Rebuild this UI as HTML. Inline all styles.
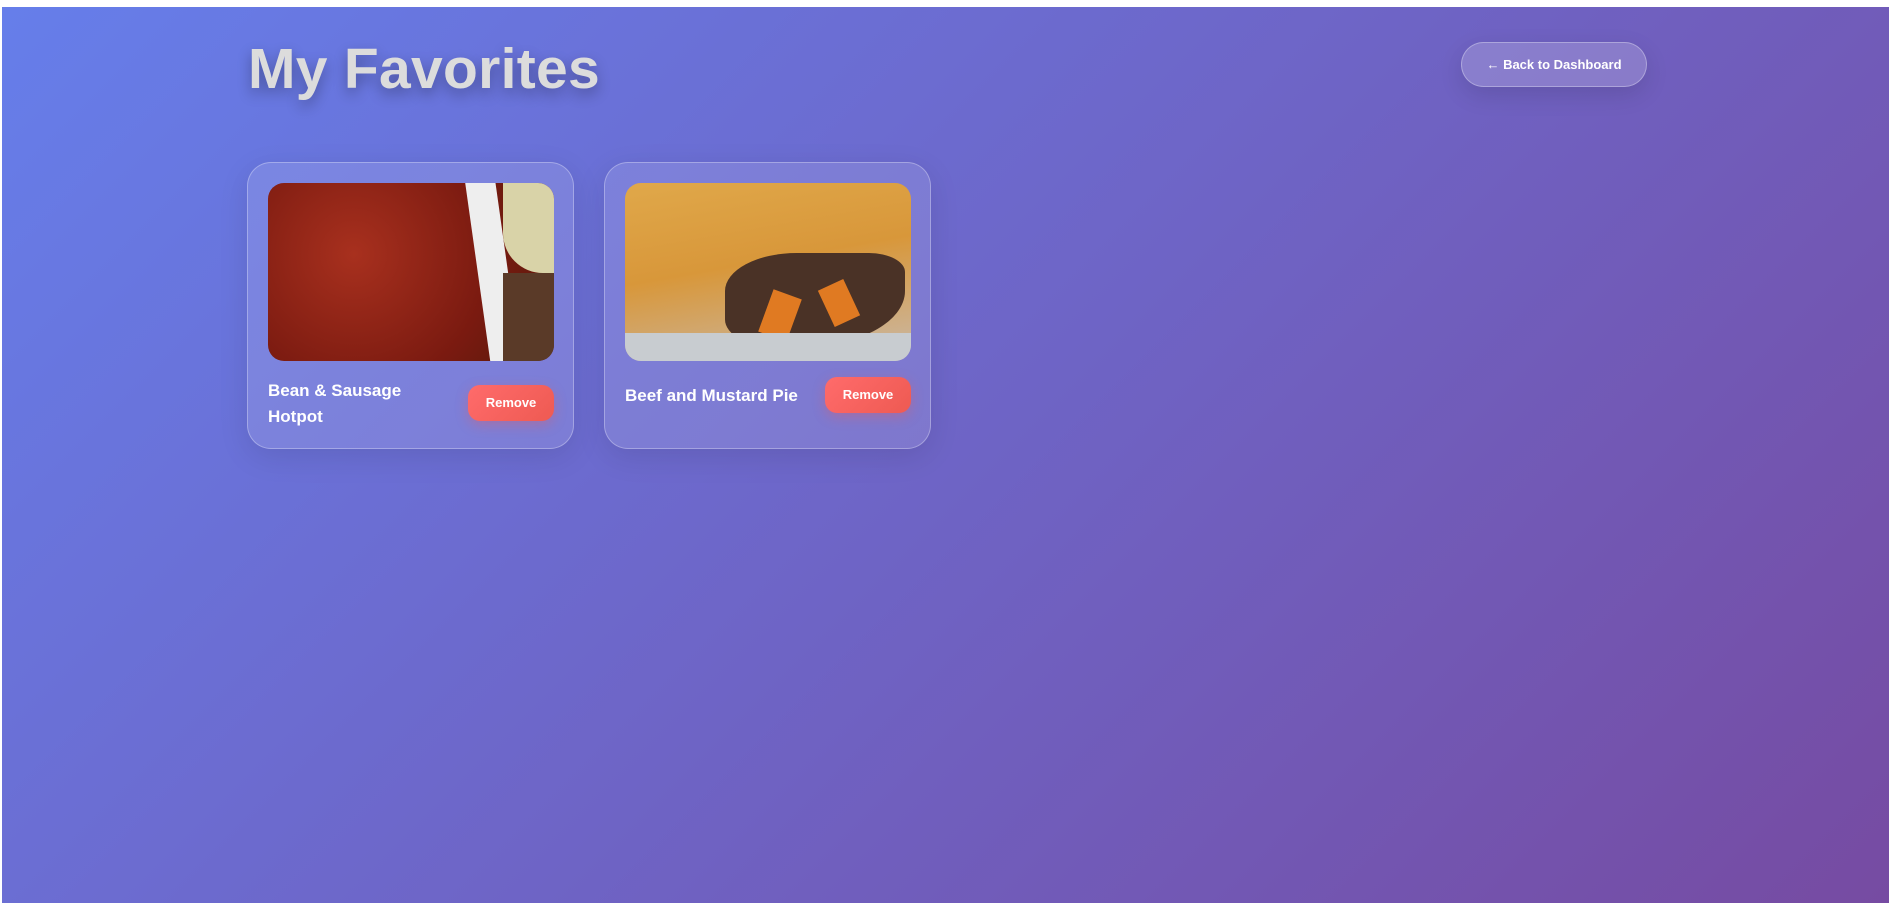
<!DOCTYPE html>
<html><head><meta charset="utf-8"><style>
html,body{margin:0;padding:0;background:#fff;width:1897px;height:903px;overflow:hidden;font-family:"Segoe UI","Liberation Sans",sans-serif}
.bg{position:absolute;left:2px;top:7px;width:1887px;height:896px;background:linear-gradient(135deg,#667eea 0%,#764ba2 100%)}
h1{position:absolute;left:248px;top:36px;margin:0;font-size:57px;font-weight:900;color:#dcdcdc;text-shadow:0 6px 14px rgba(0,0,0,.3);letter-spacing:0.3px}
.back{position:absolute;left:1461px;top:42px;width:184px;height:43px;border:1px solid rgba(255,255,255,.3);background:rgba(255,255,255,.18);border-radius:23px;color:#fff;font-size:13px;font-weight:bold;text-align:center;line-height:43px;box-shadow:0 8px 24px rgba(0,0,0,.12)}
.card{position:absolute;top:162px;width:325px;height:285px;border:1px solid rgba(255,255,255,.3);background:rgba(255,255,255,.12);border-radius:24px;box-shadow:0 8px 30px rgba(0,0,0,.1)}
.img{position:absolute;left:20px;top:20px;width:286px;height:178px;border-radius:16px;overflow:hidden}
.t{position:absolute;left:20px;color:#fff;font-weight:bold;font-size:17px;line-height:26px}
.rm{position:absolute;width:86px;height:36px;border-radius:12px;background:linear-gradient(135deg,#ff6b6b,#ee5a52);color:#fff;font-size:13px;font-weight:bold;text-align:center;line-height:36px;box-shadow:0 4px 12px rgba(238,90,82,.35)}
</style></head><body>
<div class="bg"></div>
<h1>My Favorites</h1>
<div class="back">← Back to Dashboard</div>
<div class="card" style="left:247px">
 <div class="img" style="background:radial-gradient(circle at 30% 40%,#a8301e,#7a1a10 60%,#6b1a0e 75%);">
  <div style="position:absolute;left:210px;top:-10px;width:30px;height:200px;background:#eee;transform:rotate(-8deg)"></div>
  <div style="position:absolute;left:235px;top:0;width:60px;height:90px;background:#d9d3a8;border-radius:0 0 0 40px"></div>
  <div style="position:absolute;left:235px;top:90px;width:60px;height:90px;background:#5a3a28"></div>
 </div>
 <div class="t" style="top:215px;width:150px">Bean &amp; Sausage<br>Hotpot</div>
 <div class="rm" style="left:220px;top:222px">Remove</div>
</div>
<div class="card" style="left:604px">
 <div class="img" style="background:linear-gradient(170deg,#e0a84a 0%,#d8973a 45%,#c9b9a9 100%)">
  <div style="position:absolute;left:100px;top:70px;width:180px;height:95px;background:#4a3226;border-radius:40% 20% 60% 30%"></div>
  <div style="position:absolute;left:140px;top:110px;width:30px;height:45px;background:#e07a22;transform:rotate(20deg)"></div>
  <div style="position:absolute;left:200px;top:100px;width:28px;height:40px;background:#e07a22;transform:rotate(-25deg)"></div>
  <div style="position:absolute;left:0;top:150px;width:286px;height:28px;background:#c8ccd0"></div>
 </div>
 <div class="t" style="top:220px">Beef and Mustard Pie</div>
 <div class="rm" style="left:220px;top:214px">Remove</div>
</div>
</body></html>
